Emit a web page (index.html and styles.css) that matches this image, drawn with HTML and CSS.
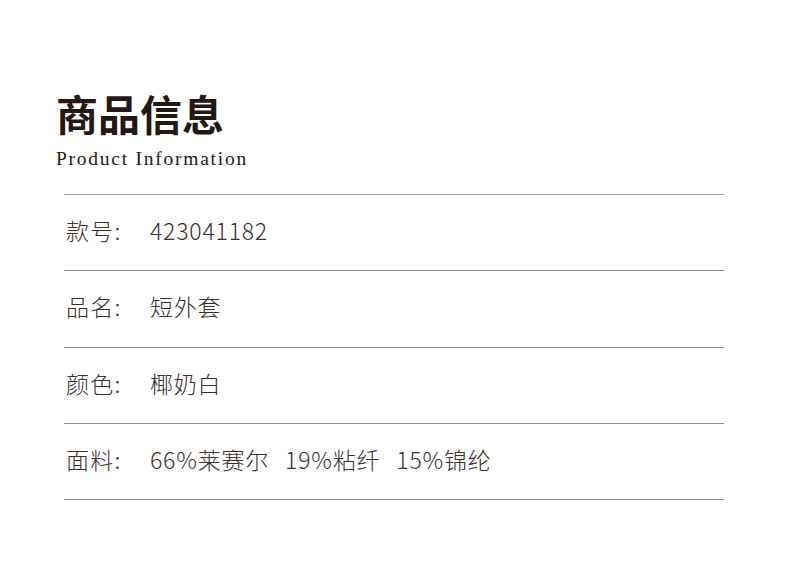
FILE: index.html
```html
<!DOCTYPE html>
<html lang="zh-CN">
<head>
<meta charset="utf-8">
<link rel="stylesheet" href="styles.css">
</head>
<body>
<div class="page">
  <header class="head">
    <h1 class="title">商品信息</h1>
    <p class="subtitle">Product Information</p>
  </header>
  <ul class="list">
    <li class="row"><span class="label">款号:</span><span class="value">423041182</span></li>
    <li class="row"><span class="label">品名:</span><span class="value">短外套</span></li>
    <li class="row"><span class="label">颜色:</span><span class="value">椰奶白</span></li>
    <li class="row"><span class="label">面料:</span><span class="value">66%莱赛尔<span class="gap"></span>19%粘纤<span class="gap"></span>15%锦纶</span></li>
  </ul>
</div>
</body>
</html>
```
FILE: styles.css
```css
html, body {
  margin: 0;
  padding: 0;
  background: #ffffff;
}
.page {
  width: 790px;
  height: 569px;
  padding: 88px 0 0 56px;
  box-sizing: border-box;
}
.head {
  display: flex;
  flex-direction: column;
}
.title {
  margin: 0;
  font-family: "Noto Sans CJK SC", sans-serif;
  font-weight: 700;
  font-size: 42px;
  line-height: 50px;
  color: #231815;
}
.subtitle {
  margin: 10px 0 0 0;
  font-family: "Liberation Serif", serif;
  font-size: 19.5px;
  line-height: 22px;
  letter-spacing: 1.75px;
  color: #231815;
}
.list {
  list-style: none;
  margin: 24px 0 0 8px;
  padding: 0;
  width: 660px;
  border-top: 1px solid #9a9a9a;
}
.row {
  display: flex;
  align-items: center;
  box-sizing: border-box;
  height: 76.25px;
  padding-bottom: 5px;
  border-bottom: 1px solid #8c8c8c;
  font-family: "Noto Sans CJK SC", sans-serif;
  font-weight: 300;
  font-size: 23px;
  letter-spacing: 0.8px;
  color: #3a302c;
}
.label {
  width: 86px;
  padding-left: 2px;
  box-sizing: border-box;
  letter-spacing: 1.2px;
}
.value {
  display: flex;
  align-items: center;
}
.gap {
  display: inline-block;
  width: 16px;
}
```
